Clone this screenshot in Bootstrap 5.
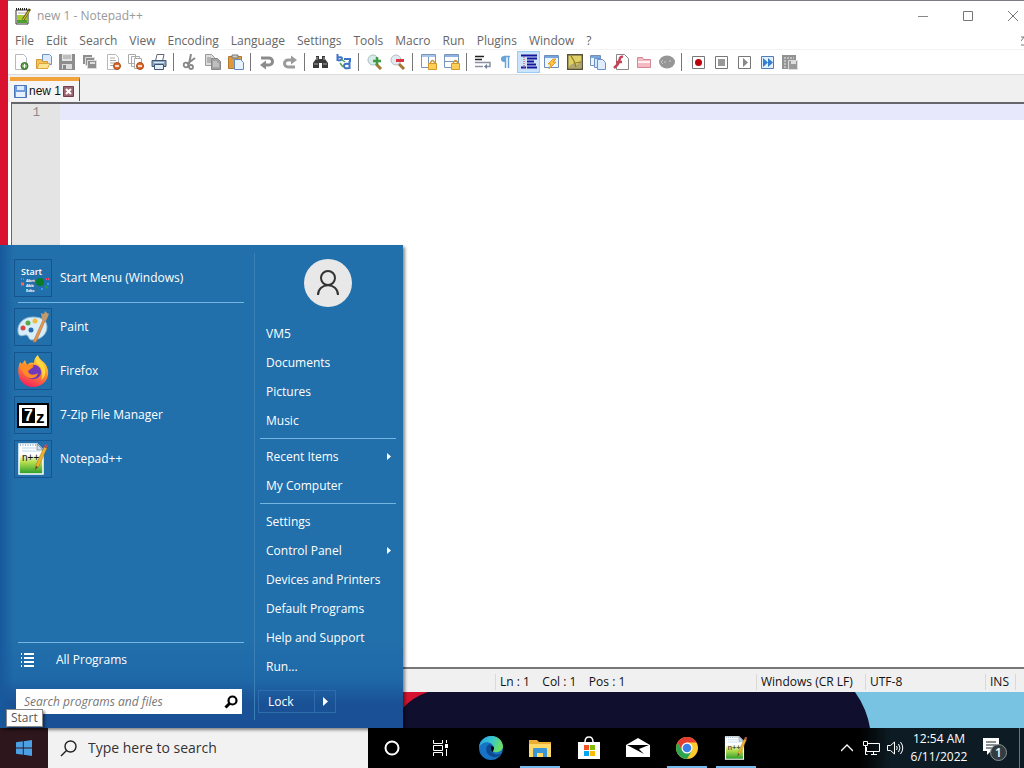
<!DOCTYPE html>
<html lang="en">
<head>
    <meta charset="UTF-8">
    <meta name="viewport" content="width=device-width, initial-scale=1.0">
    <title>Desktop</title>
    <link href="https://cdn.jsdelivr.net/npm/bootstrap@5.3.0/dist/css/bootstrap.min.css" rel="stylesheet">
    <style>
        body { font-family: "Open Sans", "Noto Sans", sans-serif; font-size: 12px; line-height: 16px; background: #d8122f; overflow: hidden; }
        button { font: inherit; color: inherit; background: none; border: 0; padding: 0; }
        svg { display: block; flex: none; }

        /* Notepad++ window */
        .npp { margin-left: 8px; background: #fff; border-top: 1px solid #7c7c84; min-height: 0; }
        .title-bar { height: 30px; color: #999; padding-left: 7px; gap: 6px; }
        .win-buttons { margin-right: -11px; }
        .win-buttons button { width: 45px; height: 28px; }
        .menu-bar { height: 19px; gap: 12px; padding: 2px 0 0 7px; color: #666; border-bottom: 1px solid #f2f2f2; }
        .menu-bar a { color: inherit; text-decoration: none; }
        .tool-bar { height: 25px; padding-left: 1px; border-bottom: 1px solid #dcdcdc; }
        .tool-btn { width: 23px; height: 22px; border: 1px solid transparent; }
        .tool-btn.pressed { background: #cce4fb; border-color: #9accf5; }
        .tool-sep { width: 1px; height: 18px; background: #777; margin: 0 4px 0 3px; }
        .tab-strip { height: 27px; background: #f0f0f0; padding: 2px 0 0 2px; }
        .doc-tab { background: #f6f5f5; border-top: 4px solid #f3a33c; border-right: 1px solid #555; padding: 0 5px 0 4px; gap: 2px; color: #111; font-family: "Liberation Sans", Arial, sans-serif; height: 24px; }
        .editor { margin-left: 3px; border-top: 2px solid #66666c; border-left: 1px solid #66666c; border-bottom: 2px solid #777; min-height: 0; }
        .gutter { width: 48px; background: #e4e4e4; color: #888; font: 12px/18px "Liberation Mono", monospace; padding-right: 20px; }
        .editor textarea { border: 0; resize: none; outline: 0; background: linear-gradient(#e8e8fd 16px, #fff 16px); font: 12px/16px "Liberation Mono", monospace; }
        .status-bar { height: 23px; background: #f0f0f0; color: #111; white-space: pre; padding-top: 2px; }
        .status-cell { border-left: 1px solid #d9d9d9; padding-left: 4px; }
        .wallpaper { height: 36px; }

        /* Start menu */
        .start-menu { left: 0; bottom: 40px; width: 403px; height: 483px; color: #fff; background: linear-gradient(90deg, #17599c, transparent 14px), linear-gradient(#216fab 82%, #1f68a8 90%, #1a5195 95%, #1a5096); box-shadow: 2px 2px 3px #0007; z-index: 2; }
        .start-menu button { text-align: left; }
        .programs { width: 254px; padding: 14px 10px 14px 14px; }
        .program { gap: 8px; height: 38px; margin-bottom: 6px; }
        .program-icon { width: 38px; height: 38px; padding: 2px; border: 1px solid #15548c; }
        .menu-line { height: 1px; background: #75b5e2; }
        .programs .menu-line { margin: 5px 0 5px 4px; }
        .places { border-left: 1px solid #3a7fb5; margin: 8px 0; padding: 6px 7px 0 5px; }
        .avatar { width: 48px; height: 48px; border-radius: 50%; background: #e9e8e8; margin-bottom: 12px; }
        .place { height: 29px; padding: 0 4px 0 6px; }
        .places .menu-line { margin: 3px 0; }
        .all-programs { height: 24px; gap: 21px; padding-left: 6px; }
        .program-search { margin: 17px 2px 0; background: #fff; height: 25px; }
        .program-search input { border: 0; outline: 0; padding: 0 8px; background: none; font-style: italic; min-width: 0; }
        .program-search input::placeholder { color: #777; }
        .lock-group { border: 1px solid #2e6dab; height: 23px; width: 78px; margin: 9px 0 0 -2px; }
        .lock-group .lock { width: 56px; padding-left: 9px; border-right: 1px solid #2e6dab; }
        .start-tip { left: 6px; bottom: 41px; z-index: 3; background: #fff; color: #555; border: 1px solid #888; padding: 0 4px; box-shadow: 2px 2px 2px #0006; }

        /* Taskbar */
        .taskbar { height: 40px; color: #fff; background: linear-gradient(90deg, #000 84%, #0d1c24 87%); }
        .start-btn { width: 48px; background: #2e171c; }
        .task-search { width: 320px; background: #f3f2f2; padding-left: 12px; gap: 9px; }
        .task-search input { border: 0; outline: 0; background: none; font-size: 14px; min-width: 0; }
        .task-search input::placeholder { color: #333; opacity: 1; }
        .task-btn { width: 48px; }
        .app-list { padding-left: 2px; }
        .app-btn { width: 49px; border-bottom: 3px solid transparent; border-top: 3px solid transparent; }
        .app-btn.running { background: linear-gradient(#76b9ed, #76b9ed) center bottom / 40px 2px no-repeat border-box; }
        .tray-btn { width: 24px; }
        .clock { width: 64px; line-height: 18px; }
        .notify { width: 48px; }
        .show-desktop { width: 5px; border-left: 1px solid #6b747a; }
    </style>
</head>
<body class="vh-100 d-flex flex-column">
    <!-- Shared Notepad++ icon and gradients -->
    <svg width="0" height="0" class="position-absolute">
        <defs>
            <linearGradient id="grass" x2="0" y2="1"><stop offset=".35" stop-color="#fff"/><stop offset=".6" stop-color="#b7e04e"/><stop offset="1" stop-color="#279a2a"/></linearGradient>
            <linearGradient id="flame" x1=".8" y1="0" x2=".4" y2="1"><stop stop-color="#fff04d"/><stop offset=".45" stop-color="#ff9a2a"/><stop offset="1" stop-color="#f5245e"/></linearGradient>
            <linearGradient id="edgeTop" x2="1" y2=".3"><stop stop-color="#249ee0"/><stop offset=".55" stop-color="#37c6d0"/><stop offset="1" stop-color="#6adf60"/></linearGradient>
            <symbol id="nppIcon" viewBox="0 0 32 32">
                <path d="M2 1h18l6 6v24H2z" fill="url(#grass)" stroke="#fff" stroke-width="1.500"/>
                <path d="M20 1v6h6z" fill="#cfe0ee" stroke="#567" stroke-width=".6"/>
                <path d="M3 2h16" stroke="#7aa6cc" stroke-width="1.500" stroke-dasharray="1 1.500"/>
                <path d="M5 5h14M5 8h18" stroke="#b8d8ef"/>
                <text x="5" y="18" font-family="Liberation Sans" font-size="10" fill="#111">n++</text>
                <path d="M19 22l8-18 3 1-8 18-4 4z" fill="#efb12c" stroke="#9a7020" stroke-width=".5"/>
                <path d="M27 4l1-3 3 1-1 3z" fill="#b64e59"/>
                <path d="M18 27l1-4 2 1z" fill="#543"/>
            </symbol>
        </defs>
    </svg>

    <main class="npp flex-grow-1 d-flex flex-column">
        <div class="title-bar d-flex align-items-center">
            <svg width="16" height="18" viewBox="0 0 16 18"><path d="M1 3h12v14H1z" fill="#fff" stroke="#333"/><path d="M2 8h10v8H2z" fill="#a8cc35"/><path d="M2 13h10v3H2z" fill="#4da12c"/><path d="M1 2h12" stroke="#222" stroke-width="2" stroke-dasharray="1 1"/><path d="M3 6h8" stroke="#aaa"/><path d="M8 13l7-11" stroke="#5b4a14" stroke-width="2.6"/><path d="M8 13l6-9" stroke="#d5cb35" stroke-width="1.2"/></svg>
            <span>new 1 - Notepad++</span>
            <div class="win-buttons d-flex ms-auto">
                <button aria-label="Minimize"><svg class="mx-auto" width="12" height="12" stroke="#888"><path d="M1 6.500h10"/></svg></button>
                <button aria-label="Maximize"><svg class="mx-auto" width="12" height="12" stroke="#777" fill="none"><path d="M1.500 1.500h9v9h-9z"/></svg></button>
                <button aria-label="Close"><svg class="mx-auto" width="12" height="12" stroke="#777"><path d="M1 1l10 10M11 1L1 11"/></svg></button>
            </div>
        </div>
        <nav class="menu-bar d-flex align-items-center" id="menuBar"></nav>
        <div class="tool-bar d-flex align-items-center" id="toolBar"></div>
        <div class="tab-strip d-flex">
            <div class="doc-tab d-flex align-items-center">
                <svg width="13" height="13"><path d="M.5 .5h12v12H.5z" fill="#6f9ddd" stroke="#4874b8"/><path d="M3 1h7v4H3z" fill="#dce9fa"/><path d="M2 7h9v5H2z" fill="#e7f1fd"/></svg>
                <span>new 1</span>
                <button aria-label="Close tab"><svg width="11" height="11"><path d="M.5 .5h10v10H.5z" fill="#9d6570" stroke="#733f4c"/><path d="M3 3l5 5M8 3L3 8" stroke="#fff" stroke-width="2"/></svg></button>
            </div>
        </div>
        <div class="editor flex-grow-1 d-flex">
            <div class="gutter text-end">1</div>
            <textarea class="flex-grow-1" aria-label="Document text"></textarea>
        </div>
        <div class="status-bar d-flex align-items-center">
            <div class="flex-grow-1"></div>
            <div class="status-cell" style="width: 261px">Ln : 1    Col : 1    Pos : 1</div>
            <div class="status-cell" style="width: 109px">Windows (CR LF)</div>
            <div class="status-cell" style="width: 120px">UTF-8</div>
            <div class="status-cell" style="width: 30px">INS</div>
            <div class="status-cell" style="width: 9px">&nbsp;</div>
        </div>
    </main>
    <div class="wallpaper">
        <svg width="100%" height="36" viewBox="0 0 1024 36" preserveAspectRatio="none">
            <path d="M0 0h1024v36H0z" fill="#78c3e2"/>
            <path d="M0 0h855q12 17 15 36H0z" fill="#100f2e"/>
            <path d="M0 0h428q-15 5-25 16H0z" fill="#d5142f"/>
        </svg>
    </div>

    <section class="start-menu position-absolute d-flex">
        <div class="programs d-flex flex-column">
            <div id="programList"></div>
            <div class="mt-auto">
                <div class="menu-line"></div>
                <button class="all-programs d-flex align-items-center w-100">
                    <svg width="15" height="14" stroke="#fff" stroke-width="2"><path d="M1 1h1M1 5h1M1 9h1M1 13h1M4 1h10M4 5h10M4 9h10M4 13h10"/></svg>
                    All Programs
                </button>
                <div class="program-search d-flex align-items-center">
                    <input class="flex-grow-1" type="text" aria-label="Search programs and files" placeholder="Search programs and files">
                    <svg class="me-1" width="14" height="14" fill="none" stroke="#000"><circle cx="8.500" cy="5.500" r="4" stroke-width="2.200"/><path d="M5.500 8.500L1.500 12.500" stroke-width="3"/></svg>
                </div>
            </div>
        </div>
        <div class="places flex-grow-1">
            <div class="avatar d-flex align-items-center justify-content-center mx-auto">
                <svg width="24" height="26" fill="none" stroke="#333" stroke-width="2"><circle cx="12" cy="8" r="7"/><path d="M2 25c0-13 20-13 20 0"/></svg>
            </div>
            <div id="placeList"></div>
            <div class="lock-group d-flex">
                <button class="lock">Lock</button>
                <button class="flex-grow-1" aria-label="Power options"><svg class="mx-auto" width="5" height="9" fill="#fff"><path d="M0 0l5 4.500L0 9z"/></svg></button>
            </div>
        </div>
    </section>
    <div class="start-tip position-absolute">Start</div>

    <footer class="taskbar d-flex flex-shrink-0">
        <button class="start-btn" aria-label="Start"><svg class="mx-auto" width="16" height="16" viewBox="0 0 16 16" fill="#4ca0e4"><path d="M0 2.300L6.800 1.300V7.500H0zM7.700 1.200L16 0v7.500H7.700zM0 8.400h6.800v6.300L0 13.700zM7.700 8.400H16V16l-8.300-1.200z"/></svg></button>
        <div class="task-search d-flex align-items-center">
            <svg width="17" height="17" fill="none" stroke="#222" stroke-width="1.400"><circle cx="10.500" cy="6.500" r="5.500"/><path d="M6.500 10.500L1 16"/></svg>
            <input class="flex-grow-1" type="text" aria-label="Type here to search" placeholder="Type here to search">
        </div>
        <button class="task-btn" aria-label="Cortana"><svg class="mx-auto" width="16" height="16" fill="none" stroke="#fff" stroke-width="2"><circle cx="8" cy="8" r="6.500"/></svg></button>
        <button class="task-btn" aria-label="Task View"><svg class="mx-auto" width="17" height="16" fill="none" stroke="#fff"><path d="M1.500 0v3.500h9V0M1.500 5.500h9v5h-9zM1.500 16v-3.500h9V16M14.500 0v3M14.500 9v7"/><path d="M13 4h3v4h-3z" fill="#fff" stroke="none"/></svg></button>
        <div class="app-list d-flex" id="appList"></div>
        <div class="d-flex ms-auto">
            <button class="tray-btn" aria-label="Hidden icons"><svg class="mx-auto" width="12" height="8" fill="none" stroke="#fff" stroke-width="1.300"><path d="M0 7l6-6 6 6"/></svg></button>
            <button class="tray-btn" aria-label="Network"><svg class="mx-auto" width="17" height="14" fill="none" stroke="#fff"><path d="M5 2.500h11.500v8H3.500V6M8 13.500h6M10.500 11v2M.500 .500h4v4h-4zM2.500 4.500v9h2"/></svg></button>
            <button class="tray-btn" aria-label="Volume"><svg class="mx-auto" width="17" height="14" fill="none" stroke="#fff"><path d="M.500 4.500h3l4-3.500v12l-4-3.500h-3zM9.500 5q1.500 2 0 4M11.500 3q3 4 0 8M13.500 1q4.500 6 0 12"/></svg></button>
            <button class="clock">12:54 AM<br>6/11/2022</button>
            <button class="notify" aria-label="Notifications: 1 new"><svg class="mx-auto" width="26" height="26"><path d="M1 3h16v13H9l-4 4v-4H1z" fill="#fff"/><path d="M4 7h10M4 10h10M4 13h7" stroke="#17242a"/><circle cx="16.500" cy="17.500" r="8" fill="#333c40" stroke="#8a9094"/><text x="16.500" y="22" text-anchor="middle" font-size="12" font-weight="600" fill="#fff">1</text></svg></button>
            <button class="show-desktop" aria-label="Show desktop"></button>
        </div>
    </footer>

    <script>
        var menus = ["File", "Edit", "Search", "View", "Encoding", "Language", "Settings", "Tools", "Macro", "Run", "Plugins", "Window", "?"];
        document.getElementById('menuBar').innerHTML = menus.map(m => `<a href="#">${m}</a>`).join('')
            + '<svg class="ms-auto" width="3" height="10" stroke="#777"><path d="M0 1h3M3 1L0 5M0 9h3"/></svg>';

        var page = '<path d="M2.500 .500h8l3 3v12h-11z" fill="#fff" stroke="#b5b9bf"/>';
        var minus = '<circle cx="12" cy="12" r="3.500" fill="#dd6a2c" stroke="#a94918"/><path d="M10 12h4" stroke="#fff" stroke-width="1.500"/>';
        var padlock = '<path d="M9.500 10V8.500q2-4 4 0V10" fill="none" stroke="#c99a3a" stroke-width="1.500"/><path d="M7.500 9.500h8v6h-8z" fill="#ffcf55" stroke="#d59928"/>';
        var macroBox = '<path d="M2.500 2.500h12v12h-12z" fill="#fff" stroke="#777"/>';

        // 16x16 drawings, null is a separator
        var tools = [
            ["New", page + '<circle cx="11.500" cy="12" r="3.500" fill="#5d9f47" stroke="#396f2a"/><path d="M9.500 12h4M11.500 10v4" stroke="#fff"/>'],
            ["Open", '<path d="M6.500 .500h7l2 2v8h-9z" fill="#dceafd" stroke="#6e93cf"/><path d="M.500 5.500h5l1 2h5v7H.500z" fill="#f6c454" stroke="#cf9832"/><path d="M1 14.500l2-5h11l-2.500 5z" fill="#ffe391" stroke="#dba73c"/>'],
            ["Save", '<path d="M0 0h16v16H0z" fill="#8d8d8d"/><path d="M3 0h10v7H3z" fill="#e4e4e4"/><path d="M4 2h8M4 4h8" stroke="#999"/><path d="M3 10h10v5H3z" fill="#ddd"/><path d="M4 11h3v4H4z" fill="#888"/>'],
            ["Save All", '<path d="M1 1h9v9H1z" fill="#8e8e8e"/><path d="M3.500 3.500h9v8h-9z" fill="#8e8e8e" stroke="#ddd"/><path d="M5.500 6.500h9v8h-9z" fill="#8e8e8e" stroke="#ddd"/><path d="M8 8h5v2H8z" fill="#ddd"/>'],
            ["Close", page + '<path d="M5 4h5M5 6.500h6M5 9h5M5 11.500h3" stroke="#aaa"/>' + minus],
            ["Close All", '<path d="M.500 .500h7v9h-7zM3.500 2.500h8v10h-8z" fill="#fff" stroke="#aaa"/><path d="M6.500 4.500h7v10h-7z" fill="#fff" stroke="#aaa"/>' + minus],
            ["Print", '<path d="M4.500 7L6 .500h7L11.500 7z" fill="#fff" stroke="#667"/><path d="M1 6.500h14v6H1z" fill="#8faac5" stroke="#3e5874"/><path d="M3.500 10.500h9v5h-9z" fill="#e4edf7" stroke="#3e5874"/><path d="M3 8.500h10" stroke="#d7e8f8"/>'],
            null,
            ["Cut", '<path d="M9 0L7 10M13 4L5 10" stroke="#888" stroke-width="2"/><circle cx="4" cy="11" r="2.300" fill="none" stroke="#888" stroke-width="1.800"/><circle cx="9" cy="13" r="2" fill="none" stroke="#888" stroke-width="1.800"/>'],
            ["Copy", '<path d="M.500 .500h6l3 3v8h-9z" fill="#ddd" stroke="#999"/><path d="M2 4h4M2 6h5M2 8h5" stroke="#888"/><path d="M6.500 4.500h6l3 3v8h-9z" fill="#a2a2a2" stroke="#888"/><path d="M8 8h4M8 10h6M8 12h6" stroke="#ddd"/>'],
            ["Paste", '<path d="M.500 2.500h13v12H.500z" fill="#dc9a3d" stroke="#b2772d"/><path d="M4 1h6v3H4z" fill="#ccc" stroke="#777"/><path d="M6.500 5.500h6l3 3v7h-9z" fill="#e7f2ff" stroke="#6189c0"/>'],
            null,
            ["Undo", '<path d="M2 4h8a3.500 3.500 0 010 7H6" fill="none" stroke="#8b8b8b" stroke-width="3"/><path d="M7 6.500v9L1 11z" fill="#8b8b8b"/>'],
            ["Redo", '<path d="M13 13H6A3.500 3.500 0 016 6h4" fill="none" stroke="#9b9b9b" stroke-width="3"/><path d="M9 1.500v9L15 6z" fill="#9b9b9b"/>'],
            null,
            ["Find", '<path d="M3 2h3v3h3V2h3v3l3 4v5H9V9H6v5H0V9l3-4z" fill="#393939"/><path d="M1 10h4M10 10h4M4 3v3M11 3v3" stroke="#aaa"/>'],
            ["Replace", '<path d="M1.500 0v7M2 3.500q4-1 4 1t-4 2M13.500 7v8M13 10q-5-1-5 2t5 2" fill="none" stroke="#3f73c8" stroke-width="2"/><path d="M5 5l4 3M4 9l3 4" stroke="#57a558" stroke-width="1.500"/><path d="M8 5h6v3" fill="none" stroke="#3f73c8" stroke-width="2"/>'],
            null,
            ["Zoom In", '<circle cx="6" cy="6" r="5" fill="#d9ecec" stroke="#a9bfc0"/><path d="M9 10l5 5" stroke="#a67836" stroke-width="3"/><path d="M10 3v8M6 7h8" stroke="#3f9c42" stroke-width="2.500"/>'],
            ["Zoom Out", '<circle cx="6" cy="6" r="5" fill="#e1e9f1" stroke="#b4bec8"/><path d="M9 10l5 5" stroke="#a67836" stroke-width="3"/><path d="M6 6.500h8" stroke="#dd3443" stroke-width="3"/>'],
            null,
            ["Sync Vertical", '<path d="M.500 .500h14v13H.500zM7.500 3v10" fill="#fff" stroke="#7995b8"/><path d="M1 2h13" stroke="#a9c6ea" stroke-width="2"/>' + padlock],
            ["Sync Horizontal", '<path d="M.500 .500h14v13H.500zM1 7.500h13" fill="#fff" stroke="#7995b8"/><path d="M1 2h13" stroke="#8db2e1" stroke-width="2"/>' + padlock],
            null,
            ["Word wrap", '<path d="M0 2.500h9M0 5.500h7" stroke="#222" stroke-width="1.500"/><path d="M0 8.500h15v4h-3M0 12.500h8" fill="none" stroke="#8a929f" stroke-width="1.500"/><path d="M12 10v5l-3-2.500z" fill="#667c9a"/>'],
            ["Show symbols", '<path d="M7.500 14V3M10.500 14V2M12 2.500H6" stroke="#6aa3d8" stroke-width="1.500"/><path d="M8 2H6a3 3 0 000 6h2z" fill="#6aa3d8"/>'],
            ["Indent guide", '<path d="M0 1.500h16M6 4.500h10M6 7.500h7M6 10.500h9M0 13.500h5M6 13.500h10" stroke="#16169b" stroke-width="2"/><path d="M3 3v12" stroke="#d33" stroke-dasharray="1 1"/>', true],
            ["User language", '<path d="M.500 1.500h14v12H.500z" fill="#eef6ff" stroke="#6c8ebb"/><path d="M1 3h13" stroke="#77a5df" stroke-width="2"/><path d="M9 5L4 10h3l-2 5 7-7H9l3-3z" fill="#ffc83e" stroke="#df9b2c"/>'],
            ["Document map", '<path d="M.700 .700h14.600v14.600H.700z" fill="#dfd168" stroke="#57513c" stroke-width="1.400"/><path d="M2 12l5-3 3 2 4-5v8H2z" fill="#b0a66f"/><path d="M4 2l3 5 2 6M8 9l6-1" stroke="#8f7e20" stroke-width="1.200" fill="none"/>'],
            ["Document list", '<path d="M.500 1.500h10v10H.500z" fill="#eaf3ff" stroke="#7890b2"/><path d="M1 3h9" stroke="#7ba7df" stroke-width="2"/><path d="M4.500 4.500h6v9h-6z" fill="#d4e7ff" stroke="#6b92c7"/><path d="M7.500 5.500h5l3 3v7h-8z" fill="#dfeeff" stroke="#6b92c7"/>'],
            ["Function list", '<path d="M3.500 .500h8l4 4v11h-12z" fill="#fff" stroke="#888"/><path d="M10 3Q7 2 6.500 6T1 14M3 8h6" fill="none" stroke="#c34459" stroke-width="2.500"/>'],
            ["Folder as Workspace", '<path d="M1.500 3.500h5l1 2h7v8h-13z" fill="#f5b9c1" stroke="#d28894"/><path d="M2 8h12" stroke="#fff0f2" stroke-width="2"/>'],
            ["Monitoring", '<ellipse cx="8" cy="8" rx="8" ry="6.500" fill="#969696"/><path d="M4 6L2 8l2 2M6 7v2M11 6v2" fill="none" stroke="#c8c8c8"/>'],
            null,
            ["Record", macroBox + '<circle cx="8.500" cy="8.500" r="3.500" fill="#bd0008"/>'],
            ["Stop", macroBox + '<path d="M5 5h7v7H5z" fill="#999"/>'],
            ["Play", macroBox + '<path d="M7 4l5 4.500L7 13z" fill="#888"/>'],
            ["Play multiple", '<path d="M2.500 2.500h12v12h-12z" fill="#e3f0ff" stroke="#527cb5"/><path d="M4 4l5 4.500L4 13zM9 4l5 4.500L9 13z" fill="#347ed0"/>'],
            ["Save macro", '<path d="M0 1h14v14H0z" fill="#929292"/><path d="M2 4h10M2 7h3M2 10h3M2 13h3" stroke="#eee" stroke-dasharray="2 1"/><path d="M6.500 6.500h9v9h-9z" fill="#999" stroke="#ddd"/><path d="M9 7h5v3H9z" fill="#ddd"/>']
        ];
        document.getElementById('toolBar').innerHTML = tools.map(t => t
            ? `<button class="tool-btn ${t[2] ? 'pressed' : ''}" aria-label="${t[0]}"><svg class="mx-auto" width="16" height="16">${t[1]}</svg></button>`
            : '<div class="tool-sep"></div>').join('');

        var programs = [
            ["Start Menu (Windows)", '<text x="4" y="13" font-size="9" font-weight="600" fill="#fff">Start</text><g font-size="4" font-weight="700" fill="#fff"><text x="9" y="20">Abrt</text><text x="9" y="25">Abb</text><text x="9" y="30">Edtc</text></g><circle cx="23" cy="20" r="4" fill="#087c29"/><path d="M4 17h3M29 17h3" stroke="#f47" stroke-width="2" stroke-dasharray="1"/><path d="M4 22h3" stroke="#f65" stroke-width="3"/><path d="M30 22h2M24 27h2" stroke="#39f" stroke-width="2"/><path d="M28 25h3" stroke="#294" stroke-width="3"/>'],
            ["Paint", '<path d="M16 6C6 6 0 13 1 21c1 6 5 3 8 3s2 5 6 5c9 0 15-6 15-13S24 6 16 6z" fill="#d7edf8" stroke="#8cb7d2"/><circle cx="6" cy="17" r="2.500" fill="#d54742"/><circle cx="11" cy="12" r="2.500" fill="#58a84c"/><circle cx="18" cy="10" r="2.500" fill="#eebd3b"/><circle cx="14" cy="19" r="2.500" fill="#286aad"/><path d="M16 31L26 9l2 1-9 21z" fill="#e59851" stroke="#b56a35" stroke-width=".6"/><path d="M25 9l-1-7 3 1 1-3 2 2 2 1-3 7z" fill="#c39a6c"/>'],
            ["Firefox", '<path d="M3 7l2 2 3-4 2 5c3-3 5-3 7-2 0-3 1-6 4-8 1 5 6 6 8 10 6 11-1 22-13 22S-2 20 3 7z" fill="url(#flame)"/><path d="M9 14c2-4 9-6 13-2s2 11-4 12-10-3-9-10z" fill="#7339bb"/><path d="M3 10c4-2 7 0 12 0 2 0 2 2 0 3l-4 3c1 5 7 4 10 2-1 7-14 9-18-8z" fill="#ff8b24"/><path d="M21 2c1 5 6 6 7 12 1 5-1 9-4 11 3-6 1-14-5-17 0-2 0-4 2-6z" fill="#ffd83c"/>'],
            ["7-Zip File Manager", '<path d="M0 4h32v25H0z" fill="#000"/><path d="M2 6h28v21H2z" fill="#fff"/><path d="M5 9h13v15H5z" fill="#000"/><g font-family="Liberation Sans" font-weight="700"><text x="7" y="22" font-size="16" fill="#fff">7</text><text x="19" y="24" font-size="17" fill="#000">z</text></g>'],
            ["Notepad++", '<use href="#nppIcon"/>']
        ];
        document.getElementById('programList').innerHTML = programs.map((p, i) => `
            <button class="program d-flex align-items-center w-100 ${i == 0 ? 'mb-0' : ''}">
                <span class="program-icon"><svg width="32" height="32">${p[1]}</svg></span>${p[0]}
            </button>${i == 0 ? '<div class="menu-line"></div>' : ''}`).join('');

        var places = ["VM5", "Documents", "Pictures", "Music", "-", "Recent Items>", "My Computer", "-", "Settings", "Control Panel>", "Devices and Printers", "Default Programs", "Help and Support", "Run..."];
        var arrow = '<svg width="5" height="7" fill="#fff"><path d="M0 0l4 3.500L0 7z"/></svg>';
        document.getElementById('placeList').innerHTML = places.map(p => p == '-'
            ? '<div class="menu-line"></div>'
            : `<button class="place d-flex align-items-center justify-content-between w-100">${p.replace('>', '')}${p.endsWith('>') ? arrow : ''}</button>`).join('');

        var apps = [
            ["Edge", false, '<circle cx="12" cy="12" r="12" fill="#1673c5"/><path d="M0 11C2-3 22-4 24 10c0 5-5 7-9 6-2-1-1-2 0-4C14 5 4 4 0 11z" fill="url(#edgeTop)"/><path d="M9 9c-4 4-1 11 5 12 4 1 7-1 9-4-5 3-10 1-11-3-1-3 1-4 1-4-1-2-3-2-4-1z" fill="#0c4a92"/><path d="M12 10q3 0 3 2t-1 3 1 2q-4-2-3-7z" fill="#000"/>'],
            ["File Explorer", true, '<path d="M1 4h8l2 2h12v15H1z" fill="#e9ae33"/><path d="M1 8h22v13H1z" fill="#ffd968"/><path d="M5 21v-8q0-1 1-1h12q1 0 1 1v8h-4v-4H9v4z" fill="#3a96d6"/>'],
            ["Store", false, '<path d="M8 6q0-5 4-5t4 5" fill="none" stroke="#fff" stroke-width="1.500"/><path d="M1 6h22v17H1z" fill="#fff"/><path d="M7 9h5v5H7z" fill="#f35325"/><path d="M13 9h5v5h-5z" fill="#81bc06"/><path d="M7 15h5v5H7z" fill="#05a6f0"/><path d="M13 15h5v5h-5z" fill="#ffba08"/>'],
            ["Mail", false, '<path d="M0 9l12-7 12 7v12H0z" fill="#fff"/><path d="M1 9h22l-10 4 5 5L1 9z" fill="#000"/>'],
            ["Chrome", true, '<circle cx="12" cy="12" r="11" fill="#fcca2f"/><path d="M2.500 6.500A11 11 0 0121.500 6.500H12L7.200 14.800z" fill="#e43c30"/><path d="M2.500 6.500A11 11 0 0012 23l4.800-8.200H7.200z" fill="#2da44f"/><circle cx="12" cy="12" r="5.500" fill="#fff"/><circle cx="12" cy="12" r="4.300" fill="#397fe7"/>'],
            ["Notepad++", true, '<use href="#nppIcon"/>']
        ];
        document.getElementById('appList').innerHTML = apps.map(a =>
            `<button class="app-btn ${a[1] ? 'running' : ''}" aria-label="${a[0]}"><svg class="mx-auto" width="24" height="24" viewBox="0 0 24 24">${a[2]}</svg></button>`).join('');
    </script>
    <script src="https://cdn.jsdelivr.net/npm/bootstrap@5.3.0/dist/js/bootstrap.bundle.min.js"></script>
</body>
</html>
